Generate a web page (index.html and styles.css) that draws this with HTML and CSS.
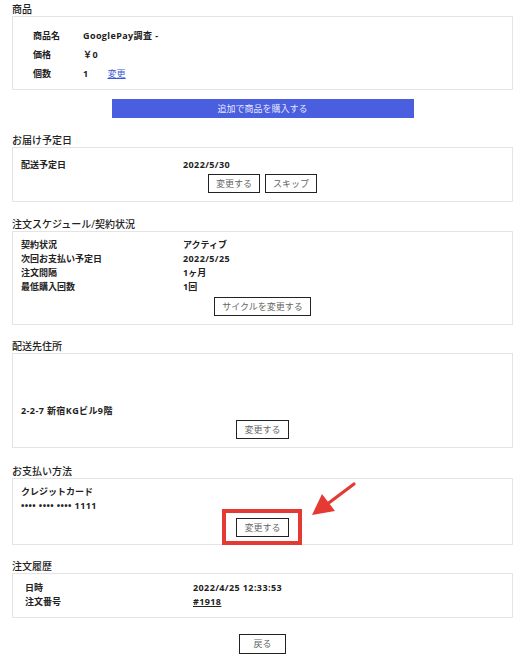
FILE: index.html
```html
<!DOCTYPE html>
<html lang="ja">
<head>
<meta charset="utf-8">
<title>定期注文詳細</title>
<link rel="stylesheet" href="styles.css">
</head>
<body>
<div class="page">
  <h2 class="sec-title first">商品</h2>
  <div class="box box-product">
    <div class="rows rows-product">
      <div class="lbl">商品名</div><div class="val latin">GooglePay調査 -</div>
      <div class="lbl">価格</div><div class="val latin">￥0</div>
      <div class="lbl">個数</div><div class="val latin">1<a class="qty-link" href="#">変更</a></div>
    </div>
  </div>
  <div class="center"><button class="btn-primary">追加で商品を購入する</button></div>

  <h2 class="sec-title">お届け予定日</h2>
  <div class="box box-delivery">
    <div class="rows rows-main">
      <div class="lbl">配送予定日</div><div class="val latin">2022/5/30</div>
    </div>
    <div class="btn-row btn-row-tight">
      <button class="btn">変更する</button>
      <button class="btn">スキップ</button>
    </div>
  </div>

  <h2 class="sec-title">注文スケジュール/契約状況</h2>
  <div class="box box-schedule">
    <div class="rows rows-main">
      <div class="lbl">契約状況</div><div class="val">アクティブ</div>
      <div class="lbl">次回お支払い予定日</div><div class="val latin">2022/5/25</div>
      <div class="lbl">注文間隔</div><div class="val">1ヶ月</div>
      <div class="lbl">最低購入回数</div><div class="val">1回</div>
    </div>
    <div class="btn-row btn-row-tight">
      <button class="btn">サイクルを変更する</button>
    </div>
  </div>

  <h2 class="sec-title sec-title-tight">配送先住所</h2>
  <div class="box box-address">
    <div class="addr latin">2-2-7 新宿KGビル9階</div>
    <div class="btn-row btn-row-addr">
      <button class="btn">変更する</button>
    </div>
  </div>

  <h2 class="sec-title sec-title-loose">お支払い方法</h2>
  <div class="box box-payment">
    <div class="pay-line">クレジットカード</div>
    <div class="pay-line latin">•••• •••• •••• 1111</div>
    <div class="btn-row btn-row-pay">
      <span class="highlight-wrap">
        <button class="btn">変更する</button>
        <span class="highlight"></span>
      </span>
    </div>
    <svg class="arrow" width="60" height="45" viewBox="0 0 60 45" aria-hidden="true">
      <line x1="51" y1="5" x2="23" y2="26" stroke="#e53a33" stroke-width="3.2" stroke-linecap="round"/>
      <polygon points="9,36 19,15 32,32" fill="#e53a33"/>
    </svg>
  </div>

  <h2 class="sec-title sec-title-tight">注文履歴</h2>
  <div class="box box-history">
    <div class="rows rows-history">
      <div class="lbl">日時</div><div class="val latin">2022/4/25 12:33:53</div>
      <div class="lbl">注文番号</div><div class="val latin"><a class="order-link" href="#">#1918</a></div>
    </div>
  </div>

  <div class="center back-row"><button class="btn btn-back">戻る</button></div>
</div>
</body>
</html>
```
FILE: styles.css
```css
* { box-sizing: border-box; }
html, body { margin: 0; padding: 0; background: #fff; }
body {
  font-family: "Open Sans", "Noto Sans CJK JP", sans-serif;
  color: #222;
  font-size: 9px;
}
.page {
  padding: 2px 8px 0 12px;
}
.sec-title {
  margin: 15px 0 0;
  font-size: 10px;
  line-height: 14px;
  font-weight: 500;
  color: #222;
}
.sec-title.first { margin-top: 0; }
.sec-title-tight { margin-top: 14px; }
.sec-title-loose { margin-top: 16px; }
.box {
  border: 1px solid #e4e4e4;
  background: #fff;
}
.rows {
  display: grid;
  font-weight: 700;
}
.lbl, .val { white-space: nowrap; }
.latin { letter-spacing: 0.4px; }
.box-product { padding: 9px 20px 6px; }
.rows-product {
  grid-template-columns: 50px 1fr;
  line-height: 19px;
}
.qty-link {
  color: #3a56d8;
  margin-left: 19px;
  font-weight: 400;
  letter-spacing: 0;
}
.center { display: flex; justify-content: center; }
.btn-primary {
  margin-top: 9px;
  width: 302px;
  height: 19px;
  border: 0;
  background: #4a5ee0;
  color: rgba(255,255,255,0.88);
  font-family: inherit;
  font-size: 9px;
  line-height: 19px;
  padding: 0;
}
.box-delivery { padding: 10px 8px 8px; }
.box-schedule { padding: 6px 8px 8px; }
.rows-main {
  grid-template-columns: 162px 1fr;
  line-height: 14px;
}
.box-delivery .rows-main { line-height: 13px; }
.btn-row {
  display: flex;
  justify-content: center;
  gap: 5px;
}
.btn-row-tight { margin-top: 3px; }
.btn {
  height: 19px;
  border: 1px solid #222;
  background: #fff;
  color: #666;
  font-family: inherit;
  font-size: 9px;
  line-height: 17px;
  padding: 0 7px;
  border-radius: 0;
}
.box-address { padding: 50px 8px 8px; }
.addr { font-weight: 700; line-height: 14px; }
.btn-row-addr { margin-top: 2px; }
.box-payment {
  position: relative;
  padding: 6px 8px 7px;
}
.pay-line { font-weight: 700; line-height: 14px; }
.btn-row-pay { margin-top: 5px; }
.highlight-wrap {
  position: relative;
  display: inline-block;
}
.highlight-wrap .btn { display: block; }
.highlight {
  position: absolute;
  left: -14px;
  top: -9px;
  width: 80px;
  height: 36px;
  border: 4px solid #e53a33;
}
.arrow {
  position: absolute;
  left: 290px;
  top: 0;
}
.box-history { padding: 7px 12px 8px; }
.rows-history {
  grid-template-columns: 168px 1fr;
  line-height: 14px;
}
.order-link { color: #222; text-decoration: underline; }
.back-row { margin-top: 16px; }
.btn-back { height: 20px; line-height: 18px; padding: 0 13px; }
```
